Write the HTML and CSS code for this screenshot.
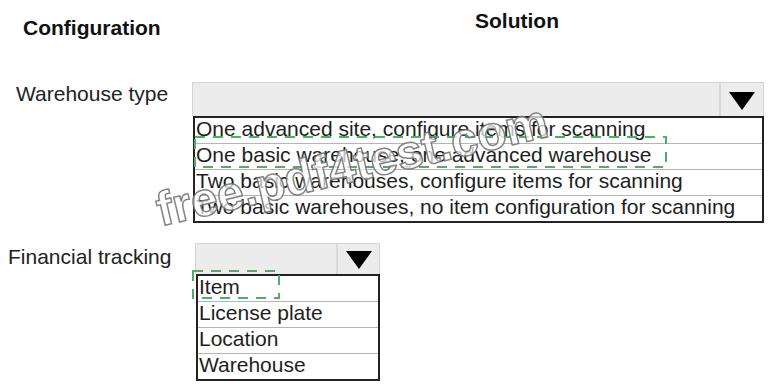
FILE: index.html
```html
<!DOCTYPE html>
<html lang="en">
<head>
<meta charset="utf-8">
<title>Configuration / Solution</title>
<link rel="stylesheet" href="styles.css">
</head>
<body>
<main class="page">
  <div class="headers">
    <h2 class="h-config">Configuration</h2>
    <h2 class="h-solution">Solution</h2>
  </div>

  <section class="field field-warehouse">
    <div class="label">Warehouse type</div>
    <div class="control">
      <div class="select">
        <span class="select-value"></span>
        <span class="select-btn"><svg width="26" height="18" viewBox="0 0 26 18"><polygon points="0,0 26,0 13,18" fill="#000"/></svg></span>
      </div>
      <ul class="options">
        <li>One advanced site, configure items for scanning</li>
        <li><span class="pick pick-1"><svg width="100%" height="100%"><rect x="1" y="1" width="471" height="30" fill="none" stroke="#55aa6a" stroke-width="2" stroke-dasharray="10 8"/></svg></span>One basic warehouse, one advanced warehouse</li>
        <li>Two basic warehouses, configure items for scanning</li>
        <li>Two basic warehouses, no item configuration for scanning</li>
      </ul>
    </div>
  </section>

  <section class="field field-financial">
    <div class="label">Financial tracking</div>
    <div class="control">
      <div class="select">
        <span class="select-value"></span>
        <span class="select-btn"><svg width="26" height="18" viewBox="0 0 26 18"><polygon points="0,0 26,0 13,18" fill="#000"/></svg></span>
      </div>
      <ul class="options">
        <li><span class="pick pick-2"><svg width="100%" height="100%"><rect x="1" y="1" width="86" height="27" fill="none" stroke="#55aa6a" stroke-width="2" stroke-dasharray="10 8"/></svg></span>Item</li>
        <li>License plate</li>
        <li>Location</li>
        <li>Warehouse</li>
      </ul>
    </div>
  </section>

  <div class="watermark">free.pdf4test.com</div>
</main>
</body>
</html>
```

FILE: styles.css
```css
* { box-sizing: border-box; }
html, body { margin: 0; padding: 0; background: #fff; }
body {
  font-family: "Liberation Sans", Arial, sans-serif;
  color: #1a1a1a;
  width: 772px;
  height: 384px;
  overflow: hidden;
}
.page { position: relative; width: 772px; height: 384px; }

.headers { display: flex; align-items: flex-start; padding-left: 23px; }
.headers h2 { margin: 0; font-size: 21px; font-weight: bold; line-height: 24px; color: #111; }
.h-config { width: 452px; margin-top: 16px !important; }
.h-solution { margin-top: 9px !important; }

.field { display: flex; align-items: flex-start; }
.label { font-size: 21px; line-height: 24px; color: #222; }
.field-warehouse { margin-top: 42px; padding-left: 16px; }
.field-warehouse .label { width: 176px; margin-top: 0; }
.field-warehouse .control { width: 572px; }
.field-financial { margin-top: 20px; padding-left: 8px; }
.field-financial .label { width: 187px; margin-top: 2px; }
.field-financial .control { width: 185px; }

.select {
  display: flex;
  height: 34px;
  background: #ececec;
  border: 1px solid #d3d3d3;
  border-bottom: none;
}
.field-financial .select { height: 31px; }
.select-value { flex: 1; }
.select-btn {
  width: 44px;
  border-left: 2px solid #d8d8d8;
  display: flex;
  align-items: center;
  justify-content: center;
  padding-top: 2px;
}
.field-financial .select-btn { width: 43px; }

.options {
  list-style: none;
  margin: 0 0 0 1px;
  padding: 0;
  border: 2px solid #222;
  background: #fff;
}
.options li {
  position: relative;
  height: 26px;
  line-height: 21px;
  padding-left: 1px;
  font-size: 21px;
  color: #1e1e1e;
  border-bottom: 1px solid #b5b5b5;
  white-space: nowrap;
}
.options li:last-child { border-bottom: none; height: 25px; }

.pick { position: absolute; display: block; pointer-events: none; }
.pick svg { display: block; }
.pick-1 { left: -1px; top: -8px; width: 474px; height: 32px; }
.pick-2 { left: -6px; top: -6px; width: 88px; height: 29px; }

.watermark {
  position: absolute;
  left: 163px;
  top: 184px;
  font-size: 48px;
  font-weight: bold;
  line-height: 52px;
  color: rgba(255, 255, 255, 0.7);
  -webkit-text-stroke: 1.5px rgba(110, 110, 110, 0.85);
  transform: rotate(-13deg);
  transform-origin: 0 100%;
  white-space: nowrap;
  pointer-events: none;
}
```
